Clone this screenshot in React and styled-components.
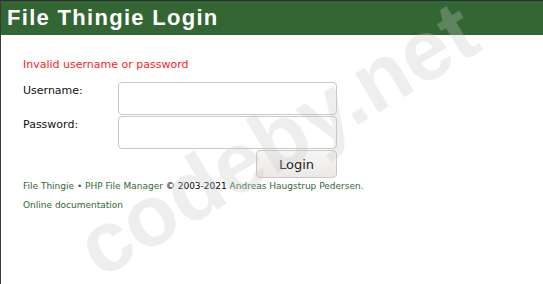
import styled, { createGlobalStyle } from "styled-components"

const GlobalStyle = createGlobalStyle`
  html, body {
    margin: 0;
    padding: 0;
    background: #ffffff;
  }
  body {
    font-family: "DejaVu Sans", Verdana, sans-serif;
  }
`;

const Page = styled.div`
  position: relative;
  width: 543px;
  height: 284px;
  box-sizing: border-box;
  border-top: 1px solid #2c2c38;
  border-left: 1px solid #3a3a3a;
  overflow: hidden;
`;

const Header = styled.div`
  height: 34px;
  background: #336633;
  display: flex;
  align-items: center;
  padding-left: 6px;
`;

const Title = styled.h1`
  margin: 0;
  font-family: "Liberation Sans", Arial, sans-serif;
  font-weight: bold;
  font-size: 22px;
  color: #ffffff;
  letter-spacing: 1.3px;
`;

const Content = styled.div`
  padding: 23px 0 0 22px;
`;

const Error = styled.p`
  margin: 0 0 11px;
  color: #ff2222;
  font-size: 11px;
`;

const Form = styled.div`
  display: grid;
  grid-template-columns: 95px 219px;
  row-gap: 1px;
`;

const Label = styled.label`
  font-size: 11px;
  color: #111;
  padding-top: 2px;
`;

const Input = styled.input`
  box-sizing: border-box;
  width: 219px;
  height: 33px;
  border: 1px solid #cbc7c3;
  border-radius: 4px;
  background: #fff;
`;

const ButtonRow = styled.div`
  grid-column: 2;
  display: flex;
  justify-content: flex-end;
`;

const Button = styled.button`
  box-sizing: border-box;
  width: 81px;
  height: 28px;
  border: 1px solid #cbc7c3;
  border-radius: 4px;
  background: linear-gradient(#f7f6f5, #ebe9e7);
  font-family: "DejaVu Sans", Verdana, sans-serif;
  font-size: 13px;
  color: #1a1a1a;
`;

const Footer = styled.p`
  margin: ${(p) => p.$top}px 0 0;
  font-size: 9px;
  color: #336633;
`;

const Plain = styled.span`
  color: #000;
`;

const Watermark = styled.div`
  position: absolute;
  left: 276px;
  top: 138px;
  transform: translate(-50%, -50%) rotate(-31deg);
  font-family: "Liberation Sans", Arial, sans-serif;
  font-weight: bold;
  font-size: 86px;
  color: rgba(200, 200, 200, 0.3);
  white-space: nowrap;
  pointer-events: none;
`;

export default function App() {
  return (
    <Page>
      <GlobalStyle />
      <Header>
        <Title>File Thingie Login</Title>
      </Header>
      <Content>
        <Error>Invalid username or password</Error>
        <Form>
          <Label>Username:</Label>
          <Input type="text" />
          <Label>Password:</Label>
          <Input type="password" />
          <ButtonRow>
            <Button>Login</Button>
          </ButtonRow>
        </Form>
        <Footer $top={3}>
          File Thingie • PHP File Manager <Plain>© 2003-2021</Plain> Andreas Haugstrup Pedersen.
        </Footer>
        <Footer $top={9}>Online documentation</Footer>
      </Content>
      <Watermark>codeby.net</Watermark>
    </Page>
  )
}
